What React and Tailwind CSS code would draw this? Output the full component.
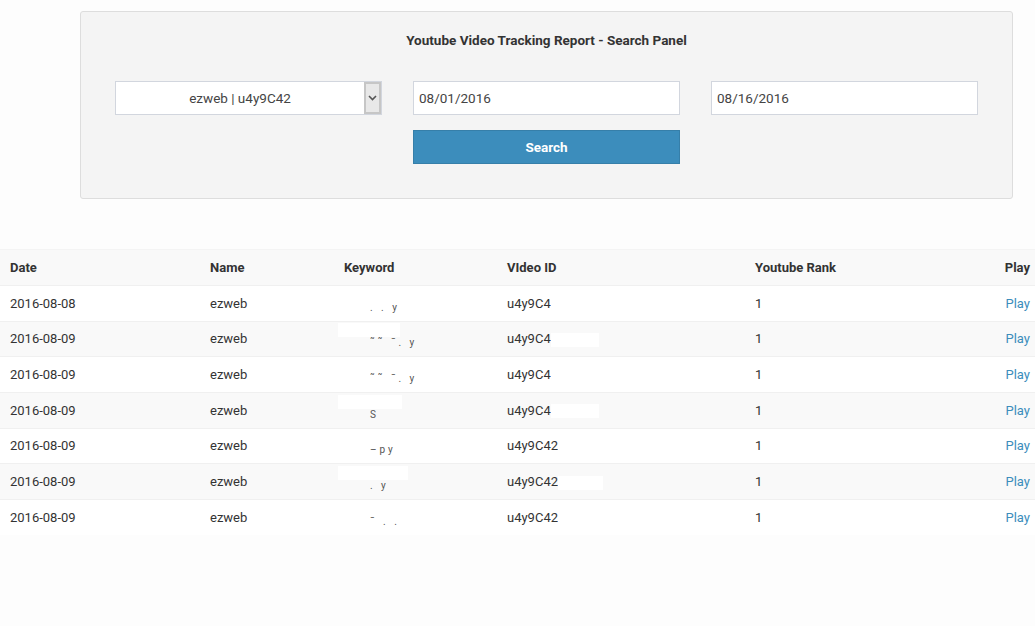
const rows = [
  { date: '2016-08-08', name: 'ezweb', kw: { frag: '. . y', box: 'w-[60px]' }, vid: 'u4y9C4', vbox: 'w-[50px]' },
  { date: '2016-08-09', name: 'ezweb', kw: { frag: '\u02dc\u02dc \u02c9. y', box: 'w-[62px]' }, vid: 'u4y9C4', vbox: 'w-[48px]' },
  { date: '2016-08-09', name: 'ezweb', kw: { frag: '\u02dc\u02dc \u02c9. y', box: 'w-[55px]' }, vid: 'u4y9C4', vbox: 'w-[30px]' },
  { date: '2016-08-09', name: 'ezweb', kw: { frag: 'S', box: 'w-[64px]' }, vid: 'u4y9C4', vbox: 'w-[48px]' },
  { date: '2016-08-09', name: 'ezweb', kw: { frag: '\u2013py', box: 'w-[70px]' }, vid: 'u4y9C42', vbox: 'w-[40px]' },
  { date: '2016-08-09', name: 'ezweb', kw: { frag: '. y', box: 'w-[70px]' }, vid: 'u4y9C42', vbox: 'w-[45px]' },
  { date: '2016-08-09', name: 'ezweb', kw: { frag: '\u02c9 . .', box: 'w-[60px]' }, vid: 'u4y9C42', vbox: 'w-[35px]' },
];

function Chevron() {
  return (
    <svg width="9" height="6" viewBox="0 0 9 6" className="text-[#555]">
      <path d="M1 1l3.5 3.5L8 1" fill="none" stroke="currentColor" strokeWidth="1.6" />
    </svg>
  );
}

export default function App() {
  return (
    <div className="min-h-[626px] bg-[#fdfdfd] text-[#333] font-['Roboto',sans-serif] text-[13px]">
      <div className="px-[80px] pt-[11px] pr-[22px]">
        <div className="bg-[#f4f4f4] border border-[#ddd] rounded-[3px] h-[188px] px-[34px] pt-[19px]">
          <h3 className="text-center font-bold text-[13.5px] text-[#333] leading-[18px]">
            Youtube Video Tracking Report - Search Panel
          </h3>
          <div className="grid grid-cols-3 gap-x-[31px] gap-y-[15px] mt-[32px]">
            <div className="h-[34px] bg-white border border-[#d2d6de] flex items-center">
              <span className="flex-1 text-center text-[13.5px] text-[#444]">ezweb | u4y9C42</span>
              <div className="w-[17px] h-[32px] bg-[#e8e8e8] border-2 border-[#c6c6c6] flex items-center justify-center">
                <Chevron />
              </div>
            </div>
            <div className="h-[34px] bg-white border border-[#d2d6de] flex items-center px-[5px] text-[13.5px] text-[#444]">
              08/01/2016
            </div>
            <div className="h-[34px] bg-white border border-[#d2d6de] flex items-center px-[5px] text-[13.5px] text-[#444]">
              08/16/2016
            </div>
            <div />
            <button className="h-[34px] bg-[#3c8dbc] border border-[#367fa9] text-white font-bold text-[13.5px]">
              Search
            </button>
          </div>
        </div>
      </div>

      <table className="mt-[50px] w-full table-fixed border-collapse text-left">
        <thead>
          <tr className="bg-[#f9f9f9] h-[36px] border-t border-[#f4f4f4]">
            <th className="pl-[10px] w-[210px] font-bold">Date</th>
            <th className="w-[134px] font-bold">Name</th>
            <th className="w-[163px] font-bold">Keyword</th>
            <th className="w-[248px] font-bold">VIdeo ID</th>
            <th className="font-bold">Youtube Rank</th>
            <th className="w-[80px] pr-[5px] text-right font-bold">Play</th>
          </tr>
        </thead>
        <tbody>
          {rows.map((r, i) => (
            <tr
              key={i}
              className={`h-[35.7px] border-t border-[#f0f0f0] ${i % 2 === 1 ? 'bg-[#f9f9f9]' : 'bg-white'}`}
            >
              <td className="pl-[10px]">{r.date}</td>
              <td>{r.name}</td>
              <td>
                <span className="relative inline-block">
                  <span className="text-[10px] tracking-[3px] text-[#555] pl-[26px] relative top-[3px]">{r.kw.frag}</span>
                  <span className={`absolute left-[-6px] top-[-6px] h-[14px] bg-white ${r.kw.box}`} />
                </span>
              </td>
              <td>
                {r.vid}
                <span className={`inline-block h-[14px] align-middle bg-white ${r.vbox}`} />
              </td>
              <td>1</td>
              <td className="pr-[5px] text-right text-[#3c8dbc]">Play</td>
            </tr>
          ))}
        </tbody>
      </table>
    </div>
  );
}
